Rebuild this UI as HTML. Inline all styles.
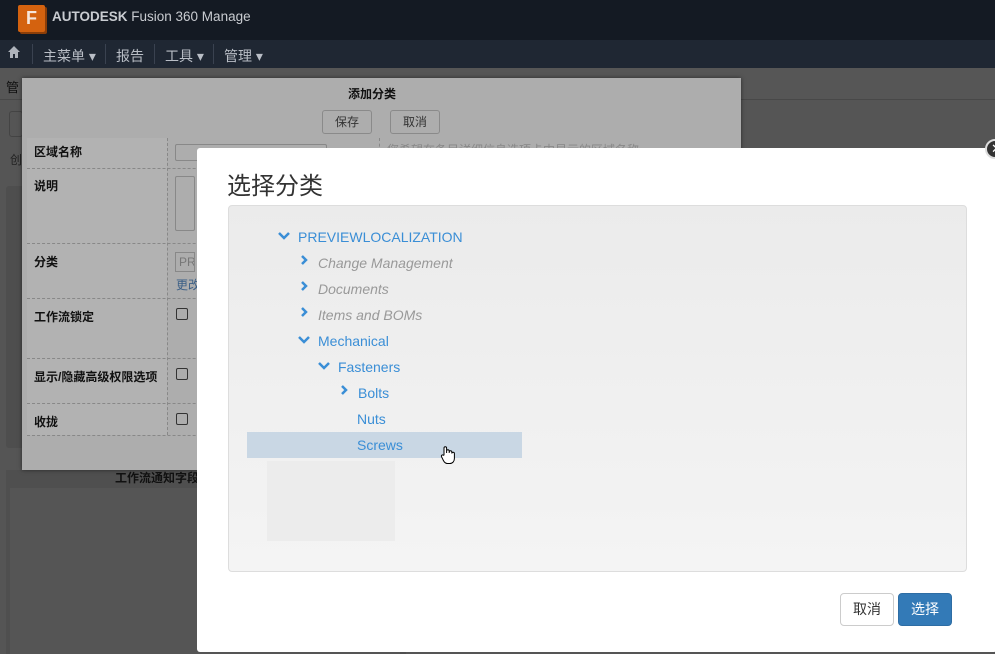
<!DOCTYPE html>
<html><head><meta charset="utf-8"><style>
*{margin:0;padding:0;box-sizing:border-box}
body{width:995px;height:654px;overflow:hidden;background:#555;font-family:"Liberation Sans","Noto Sans CJK SC",sans-serif;position:relative}
.abs{position:absolute}
.top{left:0;top:0;width:995px;height:40px;background:#141a23}
.nav{left:0;top:40px;width:995px;height:28px;background:#1f2733;color:#b9bec6;font-size:14px}
.nav span{position:absolute;top:6px}
.sep{position:absolute;top:4px;width:1px;height:20px;background:#3a4250}
.gd{left:22px;top:78px;width:719px;height:392px;background:#adadad;box-shadow:0 0 4px rgba(0,0,0,.5)}
.lbl{position:absolute;left:34px;font-size:12px;font-weight:bold;color:#111}
.hd{position:absolute;left:27px;width:520px;border-top:1px dashed #888}
.btn{position:absolute;border:1px solid #8a8a8a;border-radius:3px;font-size:12px;color:#333;text-align:center;line-height:22px;background:#adadad}
.cb{position:absolute;left:176px;width:12px;height:12px;border:1px solid #333;border-radius:2px}
.modal{left:197px;top:148px;width:800px;height:504px;background:#fff;border-radius:3px}
.tree{left:228px;top:205px;width:739px;height:367px;background:linear-gradient(#ebebeb,#f4f4f4);border:1px solid #ddd;border-radius:4px}
.it{position:absolute;font-size:14px;color:#3a8ed6}
.it.g{color:#999;font-style:italic}
</style></head><body>
<div class="abs top">
 <div class="abs" style="left:18px;top:5px;width:27px;height:27px;background:#d4620f;border-radius:2px;box-shadow:2px 2px 0 #8c3e08;color:#f6e6da;font-weight:bold;font-size:18px;text-align:center;line-height:27px">F</div>
 <div class="abs" style="left:52px;top:9px;color:#c9ccd1;font-size:13.5px"><b>AUTODESK</b> Fusion 360 Manage</div>
</div>
<div class="abs nav">
 <svg class="abs" style="left:7px;top:5px" width="14" height="14" viewBox="0 0 14 14"><path d="M7 1L1 7h2v6h3V9h2v4h3V7h2z" fill="#aeb3bb"/></svg>
 <div class="sep" style="left:32px"></div>
 <span style="left:43px">主菜单 ▾</span>
 <div class="sep" style="left:105px"></div>
 <span style="left:116px">报告</span>
 <div class="sep" style="left:154px"></div>
 <span style="left:165px">工具 ▾</span>
 <div class="sep" style="left:213px"></div>
 <span style="left:224px">管理 ▾</span>
</div>
<div class="abs" style="left:0;top:68px;width:995px;height:32px;background:#565656;border-bottom:1px solid #484848"></div>
<div class="abs" style="left:6px;top:77px;font-size:13px;color:#111">管</div>
<div class="abs" style="left:9px;top:111px;width:14px;height:26px;border:1px solid #444;border-radius:3px"></div>
<div class="abs" style="left:10px;top:151px;font-size:12px;color:#222">创</div>
<div class="abs" style="left:6px;top:186px;width:20px;height:262px;background:#4e4e4e;border-radius:3px"></div>
<div class="abs" style="left:6px;top:470px;width:400px;height:184px;background:#4f4f4f"></div>
<div class="abs" style="left:10px;top:488px;width:390px;height:166px;background:#555"></div>
<div class="abs" style="left:115px;top:469px;font-size:12px;font-weight:bold;color:#111">工作流通知字段</div>

<div class="abs gd">
 <div class="abs" style="left:326px;top:7px;font-size:12px;font-weight:bold;color:#111">添加分类</div>
 <div class="btn" style="left:300px;top:32px;width:50px;height:24px">保存</div>
 <div class="btn" style="left:368px;top:32px;width:50px;height:24px">取消</div>
 <div class="abs" style="left:5px;top:60px;width:140px;height:297px;background:#b2b2b2"></div>
 <div class="abs" style="left:145px;top:60px;height:297px;border-left:1px dashed #888"></div>
 <div class="abs" style="left:357px;top:60px;height:20px;border-left:1px dashed #888"></div>
 <div class="abs" style="left:365px;top:63px;font-size:12px;color:#888">您希望在条目详细信息选项卡中显示的区域名称</div>
 <div class="abs" style="left:153px;top:66px;width:152px;height:17px;border:1px solid #888;border-radius:2px"></div>
 <div class="abs" style="left:153px;top:98px;width:20px;height:55px;border:1px solid #888;border-radius:2px"></div>
 <div class="abs" style="left:153px;top:174px;width:20px;height:20px;border:1px solid #888;font-size:12px;color:#777;line-height:18px;padding-left:3px;overflow:hidden">PRI</div>
 <div class="abs" style="left:154px;top:198px;font-size:12px;color:#3b5f86">更改</div>
</div>
<div class="hd" style="top:168px"></div>
<div class="hd" style="top:243px"></div>
<div class="hd" style="top:298px"></div>
<div class="hd" style="top:358px"></div>
<div class="hd" style="top:403px"></div>
<div class="hd" style="top:435px"></div>
<div class="lbl" style="top:143px">区域名称</div>
<div class="lbl" style="top:177px">说明</div>
<div class="lbl" style="top:253px">分类</div>
<div class="lbl" style="top:308px">工作流锁定</div>
<div class="lbl" style="top:368px">显示/隐藏高级权限选项</div>
<div class="lbl" style="top:413px">收拢</div>
<div class="cb" style="top:308px"></div>
<div class="cb" style="top:368px"></div>
<div class="cb" style="top:413px"></div>

<div class="abs modal"></div>
<div class="abs" style="left:985px;top:139px;width:20px;height:20px;border-radius:50%;background:#333;border:2px solid #ddd;color:#fff;font-size:13px;line-height:16px;padding-left:4px">✕</div>
<div class="abs" style="left:227px;top:166px;font-size:24px;color:#333">选择分类</div>
<div class="abs tree">
 <div class="abs" style="left:38px;top:255px;width:128px;height:80px;background:#ececec"></div>
 <div class="abs" style="left:18px;top:226px;width:275px;height:26px;background:#c9d7e4"></div>
</div>
<svg class="abs" style="left:0;top:0" width="995" height="654">
 <g fill="none" stroke="#3a8ed6" stroke-width="2.5">
  <path d="M279 233l5 5 5-5"/>
  <path d="M302 256l4 4-4 4"/>
  <path d="M302 282l4 4-4 4"/>
  <path d="M302 308l4 4-4 4"/>
  <path d="M299 337l5 5 5-5"/>
  <path d="M319 363l5 5 5-5"/>
  <path d="M342 386l4 4-4 4"/>
 </g>
 <path d="M444 455v-7a1.3 1.3 0 0 1 2.6 0v5 -2a1.3 1.3 0 0 1 2.6 0v2 -1a1.3 1.3 0 0 1 2.6 0v1.5a1.3 1.3 0 0 1 2.6 0v5c0 3-2 5-4.5 5h-2.5c-2 0-3-1-4-3l-2-4a1.2 1.2 0 0 1 2-1.2z" fill="#fff" stroke="#000" stroke-width="1"/>
</svg>
<div class="it" style="left:298px;top:229px">PREVIEWLOCALIZATION</div>
<div class="it g" style="left:318px;top:255px">Change Management</div>
<div class="it g" style="left:318px;top:281px">Documents</div>
<div class="it g" style="left:318px;top:307px">Items and BOMs</div>
<div class="it" style="left:318px;top:333px">Mechanical</div>
<div class="it" style="left:338px;top:359px">Fasteners</div>
<div class="it" style="left:358px;top:385px">Bolts</div>
<div class="it" style="left:357px;top:411px">Nuts</div>
<div class="it" style="left:357px;top:437px">Screws</div>
<div class="abs" style="left:840px;top:593px;width:54px;height:33px;border:1px solid #ccc;border-radius:4px;font-size:14px;color:#333;text-align:center;line-height:31px">取消</div>
<div class="abs" style="left:898px;top:593px;width:54px;height:33px;background:#337ab7;border:1px solid #2e6da4;border-radius:4px;font-size:14px;color:#fff;text-align:center;line-height:31px">选择</div>
</body></html>
